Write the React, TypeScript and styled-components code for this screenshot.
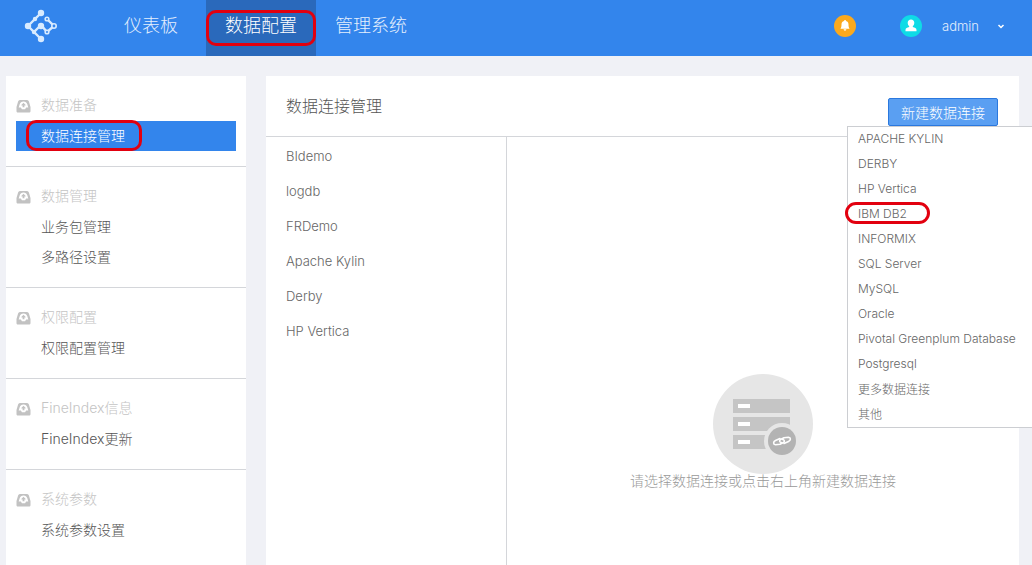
import React from "react";
import styled, { createGlobalStyle, css } from "styled-components";

const GlobalStyle = createGlobalStyle`
  *, *::after { box-sizing: border-box; }
  body {
    margin: 0;
    overflow-x: hidden;
    background: #f0f1f6;
    color: #666;
    font-family: Inter, "Noto Sans CJK SC", sans-serif;
    font-size: 14px;
    font-weight: 300;
  }
  ul { list-style: none; margin: 0; padding: 0; }
  h1, h2, p { margin: 0; font-weight: inherit; }
  a { color: inherit; text-decoration: none; }
  button { font: inherit; color: inherit; cursor: pointer; }
`;

const ring = css`
  content: "";
  position: absolute;
  border: 3px solid #e2000f;
  pointer-events: none;
`;

const Page = styled.div`
  min-height: 100vh;
  display: flex;
  flex-direction: column;
`;

const Header = styled.header`
  display: flex;
  height: 56px;
  padding: 0 27px 0 24px;
  background: #3385ec;
  color: #e4effd;
`;

const LogoLink = styled.a`
  width: 72px;
  padding-top: 9px;
`;

const Nav = styled.nav`
  display: flex;
  flex: 1;
`;

const NavLink = styled.a<{ $active?: boolean }>`
  position: relative;
  width: 110px;
  text-align: center;
  font-size: 18px;
  line-height: 52px;
  ${(p) =>
    p.$active &&
    css`
      background: #2a69bb;
      color: #fff;
      &::after {
        ${ring}
        inset: 10px 0;
        border-radius: 10px;
      }
    `}
`;

const Account = styled.div`
  display: flex;
  align-items: center;
  height: 52px;
`;

const RoundButton = styled.button<{ $color: string; $gap: number }>`
  width: 22px;
  height: 22px;
  padding: 0;
  border: 0;
  border-radius: 50%;
  margin-right: ${(p) => p.$gap}px;
  background: ${(p) => p.$color};
  svg { display: block; }
`;

const UserButton = styled.button`
  display: flex;
  align-items: center;
  gap: 18px;
  padding: 0;
  border: 0;
  background: none;
  font-size: 13px;
`;

const Body = styled.div`
  flex: 1;
  display: flex;
  gap: 20px;
  padding: 20px 13px 0 6px;
`;

const Sidebar = styled.aside`
  width: 240px;
  flex: none;
  background: #fff;
`;

const Group = styled.section`
  padding: 15px 10px;
  border-bottom: 1px solid #d4d6da;
  &:last-child { border-bottom: 0; }
`;

const GroupTitle = styled.h2`
  display: flex;
  align-items: center;
  gap: 10px;
  height: 30px;
  font-size: 14px;
  line-height: 28px;
  color: #c4c4c4;
  span { height: 30px; }
`;

const SideLink = styled.a<{ $active?: boolean }>`
  position: relative;
  display: block;
  padding-left: 25px;
  line-height: 30px;
  color: #555;
  ${(p) =>
    p.$active &&
    css`
      background: #3385ec;
      color: #fff;
      &::after {
        ${ring}
        left: 10px;
        width: 116px;
        top: -1px;
        bottom: 0;
        border-radius: 10px;
      }
    `}
`;

const Main = styled.main`
  flex: 1;
  display: flex;
  flex-direction: column;
  background: #fff;
`;

const TitleBar = styled.div`
  display: flex;
  justify-content: space-between;
  height: 61px;
  padding: 0 21px 0 20px;
  border-bottom: 1px solid #d4d6da;
`;

const Title = styled.h1`
  font-size: 16px;
  line-height: 60px;
  color: #555;
`;

const Dropdown = styled.div`
  position: relative;
  padding-top: 22px;
`;

const CreateButton = styled.button`
  display: block;
  width: 110px;
  height: 28px;
  padding: 0;
  border: 1px solid #2a78de;
  border-radius: 2px;
  background: #5a9ff2;
  color: #fff;
`;

const Menu = styled.ul`
  position: absolute;
  top: 50px;
  left: -41px;
  min-width: 192px;
  border: 1px solid #ccced2;
  background: #fff;
  font-size: 12px;
  white-space: nowrap;
`;

const MenuItem = styled.button<{ $marked?: boolean }>`
  position: relative;
  display: block;
  width: 100%;
  height: 25px;
  padding: 0 10px 3px;
  border: 0;
  background: none;
  text-align: left;
  ${(p) =>
    p.$marked &&
    css`
      &::after {
        ${ring}
        left: -3px;
        width: 85px;
        top: 0;
        height: 22px;
        border-radius: 11px;
      }
    `}
`;

const Content = styled.div`
  flex: 1;
  display: flex;
`;

const Connections = styled.ul`
  width: 241px;
  padding: 2px 20px;
  border-right: 1px solid #d4d6da;
  font-size: 13px;
  line-height: 35px;
`;

const Empty = styled.div`
  flex: 1;
  display: flex;
  flex-direction: column;
  align-items: center;
  padding-top: 237px;
  color: #999;
  line-height: 14px;
`;

const Logo = () => (
  <svg width="34" height="34" viewBox="0 0 34 34" fill="none" stroke="#d8ebff" strokeWidth="2.4" aria-hidden="true">
    <path d="M17 4 4 17 17 30M10 23l7-7 6 7 7-6-7-7" />
    <g fill="#d8ebff" stroke="none">
      <circle cx="17" cy="4" r="3.2" />
      <circle cx="4" cy="17" r="3.2" />
      <circle cx="17" cy="30" r="3.2" />
      <circle cx="17" cy="17" r="3.2" />
      <circle cx="10" cy="23" r="2.2" />
      <circle cx="11" cy="10" r="2.2" />
    </g>
    <g fill="#3385ec" strokeWidth="1.6">
      <circle cx="23" cy="10" r="1.8" />
      <circle cx="30" cy="17" r="2.2" />
      <circle cx="23" cy="23" r="1.8" />
    </g>
  </svg>
);

const BellIcon = () => (
  <svg width="22" height="22" viewBox="0 0 22 22" fill="#fff" aria-hidden="true">
    <path d="M11 5c.6 0 1 .4 1 .9 1.800.4 2.500 1.800 2.500 3.500 0 2.300.3 3.200 1.100 4.300H6.400c.8-1.100 1.100-2 1.100-4.300 0-1.700.7-3.100 2.500-3.500 0-.5.4-.9 1-.9zM9.600 14.300h2.800a1.400 1.400 0 0 1-2.800 0z" />
  </svg>
);

const UserIcon = () => (
  <svg width="22" height="22" viewBox="0 0 22 22" fill="#fff" aria-hidden="true">
    <path d="M11 4.500c2 0 3.300 1.400 3.300 3.300 0 1.500-.6 2.700-1.500 3.400v.9c2 .5 3.700 1.200 3.700 3v1.200h-11v-1.200c0-1.800 1.700-2.500 3.700-3v-.9c-.9-.7-1.500-1.900-1.500-3.400 0-1.900 1.300-3.300 3.300-3.300z" />
  </svg>
);

const TrayIcon = () => (
  <svg width="15" height="14" viewBox="0 0 15 14" aria-hidden="true">
    <path
      fill="#c2c2c2"
      fillRule="evenodd"
      d="M4.500 1h6c1.200 0 2 .5 2.400 1.500L14.500 8v4c0 1-.6 1.600-1.500 1.600H2c-.9 0-1.500-.6-1.500-1.600V8l1.600-5.500C2.500 1.500 3.300 1 4.500 1zM7.500 2.600C5.500 2.600 4.200 3.800 3.600 5.500L2.700 8.600h2.200l1 1.600h3.200l1-1.600h2.200l-.9-3.100C10.800 3.800 9.500 2.600 7.500 2.600z"
    />
    <path fill="#c2c2c2" d="M7.500 3.800 10 6.300 8.400 6.600v1.600H6.600V6.600L5 6.300z" />
  </svg>
);

const ServerIcon = () => (
  <svg width="100" height="100" viewBox="0 0 100 100" aria-hidden="true">
    <circle cx="50" cy="50" r="50" fill="#e6e6e6" />
    <path fill="#c5c5c5" d="M20 25h57v14H20zM20 43h57v14H20zM20 61h57v14H20z" />
    <path fill="#fff" d="M25 30h12v4H25zM25 48h12v4H25zM25 66h12v4H25z" />
    <circle cx="69" cy="67" r="18" fill="#e6e6e6" />
    <circle cx="69" cy="67" r="14" fill="#b3b3b3" />
    <g fill="none" stroke="#fff" strokeWidth="1.6" strokeLinecap="round" strokeLinejoin="round">
      <path d="M67 64.500 62.500 66.500C60 67.600 60 70.500 62.500 70.800L67 70.300 70.500 68.500C72 67.500 71.500 65.500 69.500 65.500" />
      <path d="M71 69.500 75.500 67.500C78 66.400 78 63.500 75.500 63.200L71 63.700 67.500 65.500C66 66.500 66.500 68.500 68.500 68.500" />
    </g>
  </svg>
);

const groups = [
  { title: "数据准备", items: ["数据连接管理"] },
  { title: "数据管理", items: ["业务包管理", "多路径设置"] },
  { title: "权限配置", items: ["权限配置管理"] },
  { title: "FineIndex信息", items: ["FineIndex更新"] },
  { title: "系统参数", items: ["系统参数设置"] },
];

const connections = ["BIdemo", "logdb", "FRDemo", "Apache Kylin", "Derby", "HP Vertica"];

const databases = [
  "APACHE KYLIN", "DERBY", "HP Vertica", "IBM DB2", "INFORMIX", "SQL Server",
  "MySQL", "Oracle", "Pivotal Greenplum Database", "Postgresql", "更多数据连接", "其他",
];

export default function App() {
  return (
    <Page>
      <GlobalStyle />
      <Header>
        <LogoLink href="#" aria-label="Home"><Logo /></LogoLink>
        <Nav>
          <NavLink href="#">仪表板</NavLink>
          <NavLink href="#" $active aria-current="page">数据配置</NavLink>
          <NavLink href="#">管理系统</NavLink>
        </Nav>
        <Account>
          <RoundButton $color="#fba91d" $gap={44} aria-label="Notifications"><BellIcon /></RoundButton>
          <RoundButton $color="#0fdbe6" $gap={20} aria-label="Profile"><UserIcon /></RoundButton>
          <UserButton>
            admin
            <svg width="8" height="8" viewBox="0 0 8 8" fill="none" stroke="#fff" strokeWidth="1.5" aria-hidden="true">
              <path d="m1.500 3 2.500 2.500L6.500 3" />
            </svg>
          </UserButton>
        </Account>
      </Header>
      <Body>
        <Sidebar>
          {groups.map((group) => (
            <Group key={group.title}>
              <GroupTitle><TrayIcon /><span>{group.title}</span></GroupTitle>
              {group.items.map((item) => (
                <SideLink key={item} href="#" $active={item === "数据连接管理"}>{item}</SideLink>
              ))}
            </Group>
          ))}
        </Sidebar>
        <Main>
          <TitleBar>
            <Title>数据连接管理</Title>
            <Dropdown>
              <CreateButton aria-expanded="true">新建数据连接</CreateButton>
              <Menu>
                {databases.map((name) => (
                  <li key={name}><MenuItem $marked={name === "IBM DB2"}>{name}</MenuItem></li>
                ))}
              </Menu>
            </Dropdown>
          </TitleBar>
          <Content>
            <Connections>
              {connections.map((name) => <li key={name}>{name}</li>)}
            </Connections>
            <Empty>
              <ServerIcon />
              <p>请选择数据连接或点击右上角新建数据连接</p>
            </Empty>
          </Content>
        </Main>
      </Body>
    </Page>
  );
}
